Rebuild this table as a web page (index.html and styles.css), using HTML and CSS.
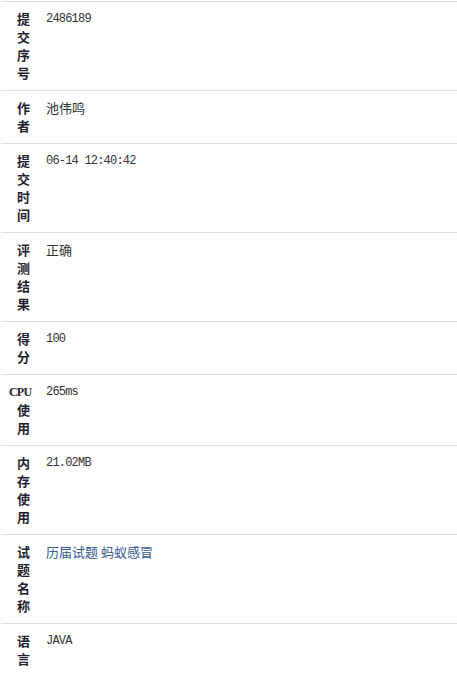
FILE: index.html
```html
<!DOCTYPE html>
<html lang="zh-CN">
<head>
<meta charset="utf-8">
<title>提交详情</title>
<link rel="stylesheet" href="styles.css">
</head>
<body>
<div class="wrap">
<table class="info">
  <tr><th>提交序号</th><td class="num">2486189</td></tr>
  <tr><th>作者</th><td>池伟鸣</td></tr>
  <tr><th>提交时间</th><td class="num">06-14 12:40:42</td></tr>
  <tr><th>评测结果</th><td>正确</td></tr>
  <tr><th>得分</th><td class="num">100</td></tr>
  <tr><th><span class="abbr">CPU</span>使用</th><td class="num">265ms</td></tr>
  <tr><th>内存使用</th><td class="num">21.02MB</td></tr>
  <tr><th>试题名称</th><td><a class="link" href="#">历届试题 蚂蚁感冒</a></td></tr>
  <tr><th>语言</th><td class="num">JAVA</td></tr>
</table>
</div>
</body>
</html>
```

FILE: styles.css
```css
html, body {
  margin: 0;
  padding: 0;
  background: #fff;
}
.wrap {
  padding: 1px 0 0 1px;
}
.info {
  width: 456px;
  border-collapse: collapse;
  table-layout: fixed;
  font-size: 13px;
  line-height: 18px;
  color: #333;
}
.info th,
.info td {
  border-top: 1px solid #dddddd;
  padding: 8px;
  vertical-align: top;
}
.info th {
  width: 21px;
  text-align: right;
  font-weight: bold;
  color: #1f1f2e;
  font-family: "Noto Sans CJK SC", sans-serif;
  word-break: break-all;
}
.info th .abbr {
  display: block;
  white-space: nowrap;
  word-break: normal;
  font-family: "Liberation Serif", serif;
  font-size: 12px;
  letter-spacing: -0.8px;
  margin-right: -1px;
}
.info td {
  font-family: "Noto Sans CJK SC", sans-serif;
  font-weight: normal;
  color: #333;
}
.info td.num {
  font-family: "Liberation Mono", monospace;
  font-size: 12px;
  letter-spacing: -0.8px;
  color: #333;
}
.link {
  color: #345a8e;
  text-decoration: none;
}
```
